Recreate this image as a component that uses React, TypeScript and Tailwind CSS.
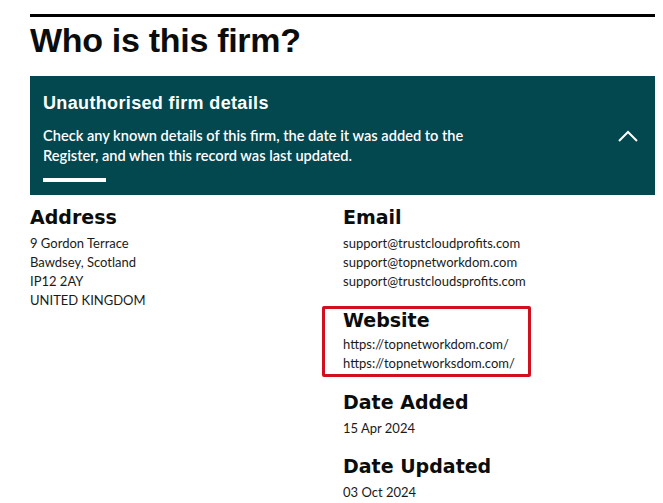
import React from "react";

const body = { fontFamily: "Lato, 'Open Sans', sans-serif" };
const head = { fontFamily: "'DejaVu Sans', Verdana, sans-serif" };
const title = { fontFamily: "'Liberation Sans', Arial, sans-serif" };

function SectionTitle({ children }: { children: React.ReactNode }) {
  return (
    <h3 className="text-[19px] font-bold leading-[24px] text-[#0b0c0c]" style={head}>
      {children}
    </h3>
  );
}

function Lines({ items }: { items: string[] }) {
  return (
    <div className="mt-[5px] text-[13px] leading-[19px] text-[#1a1a1a]" style={body}>
      {items.map((t) => (
        <div key={t}>{t}</div>
      ))}
    </div>
  );
}

export default function App() {
  return (
    <div className="w-[663px] h-[503px] overflow-hidden bg-white">
      <div className="ml-[30px] w-[625px] pt-[14px]">
        <div className="h-[3px] bg-black" />
        <h1
          className="mt-[3px] text-[34px] font-bold leading-[40px] text-[#0b0c0c] tracking-[-0.3px]"
          style={title}
        >
          Who is this firm?
        </h1>

        {/* collapsible panel header */}
        <div className="mt-[16px] h-[119px] bg-[#03474f] pl-[13px] pr-[17px] pt-[15px] flex">
          <div className="flex-1">
            <h2
              className="text-[18px] font-bold leading-[24px] text-white tracking-[0.35px]"
              style={title}
            >
              Unauthorised firm details
            </h2>
            <p
              className="mt-[11px] w-[440px] text-[14.6px] font-semibold leading-[20px] text-white"
              style={body}
            >
              Check any known details of this firm, the date it was added to the Register, and
              when this record was last updated.
            </p>
            <div className="mt-[12px] h-[4px] w-[63px] bg-white" />
          </div>
          <svg width="20" height="12" viewBox="0 0 20 12" className="mt-[39px]" fill="none">
            <path d="M1 11 L10 2 L19 11" stroke="white" strokeWidth="2" />
          </svg>
        </div>

        <div className="mt-[10px] grid grid-cols-[313px_1fr]">
          <div>
            <SectionTitle>Address</SectionTitle>
            <Lines items={["9 Gordon Terrace", "Bawdsey, Scotland", "IP12 2AY", "UNITED KINGDOM"]} />
          </div>
          <div>
            <SectionTitle>Email</SectionTitle>
            <Lines
              items={[
                "support@trustcloudprofits.com",
                "support@topnetworkdom.com",
                "support@trustcloudsprofits.com",
              ]}
            />

            <div className="mt-[15px] -ml-[21px] w-[209px] border-[3px] border-[#d0101e] rounded-[2px] pl-[18px] pb-[1px]">
              <h3 className="text-[19px] font-bold leading-[22px] text-[#0b0c0c]" style={head}>
                Website
              </h3>
              <div className="mt-[4px] text-[13px] leading-[19px] text-[#1a1a1a]" style={body}>
                <div>https://topnetworkdom.com/</div>
                <div>https://topnetworksdom.com/</div>
              </div>
            </div>

            <div className="mt-[13px]">
              <SectionTitle>Date Added</SectionTitle>
              <Lines items={["15 Apr 2024"]} />
            </div>
            <div className="mt-[16px]">
              <SectionTitle>Date Updated</SectionTitle>
              <Lines items={["03 Oct 2024"]} />
            </div>
          </div>
        </div>
      </div>
    </div>
  );
}
